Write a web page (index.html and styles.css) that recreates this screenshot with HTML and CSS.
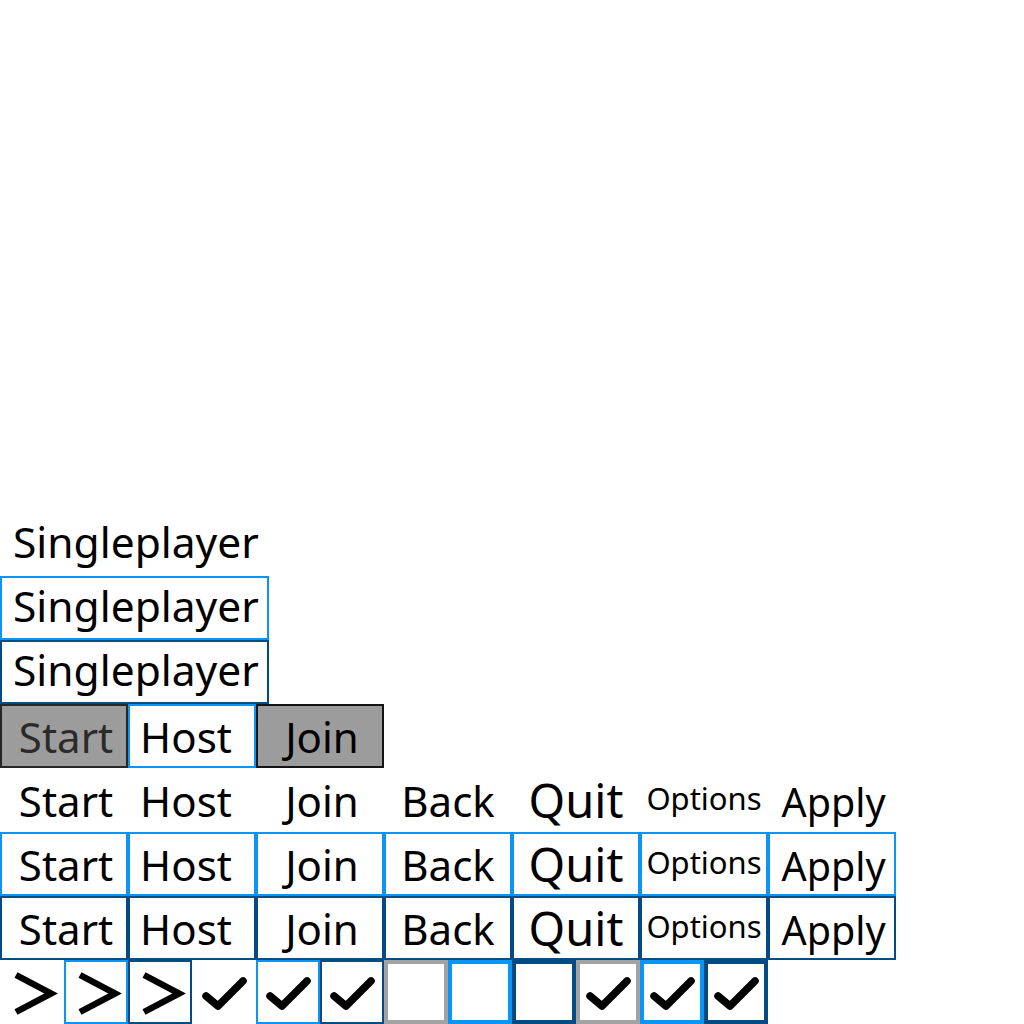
FILE: index.html
```html
<!DOCTYPE html>
<html>
<head>
<meta charset="utf-8">
<link rel="stylesheet" href="styles.css">
</head>
<body>
<div class="page">
  <div class="row"><div class="wide">Singleplayer</div></div>
  <div class="row"><div class="wide light">Singleplayer</div></div>
  <div class="row"><div class="wide dark">Singleplayer</div></div>
  <div class="row">
    <div class="btn grey soft start">Start</div>
    <div class="btn light host">Host</div>
    <div class="btn grey hard join">Join</div>
  </div>
  <div class="row">
    <div class="btn start">Start</div>
    <div class="btn host">Host</div>
    <div class="btn join">Join</div>
    <div class="btn">Back</div>
    <div class="btn quit">Quit</div>
    <div class="btn opts">Options</div>
    <div class="btn apply">Apply</div>
  </div>
  <div class="row">
    <div class="btn light start">Start</div>
    <div class="btn light host">Host</div>
    <div class="btn light join">Join</div>
    <div class="btn light">Back</div>
    <div class="btn light quit">Quit</div>
    <div class="btn light opts">Options</div>
    <div class="btn light apply">Apply</div>
  </div>
  <div class="row">
    <div class="btn dark start">Start</div>
    <div class="btn dark host">Host</div>
    <div class="btn dark join">Join</div>
    <div class="btn dark">Back</div>
    <div class="btn dark quit">Quit</div>
    <div class="btn dark opts">Options</div>
    <div class="btn dark apply">Apply</div>
  </div>
  <div class="row">
    <div class="cell"><svg viewBox="0 0 64 64"><polyline class="chev" points="16,15 51,33.5 16,52"/></svg></div>
    <div class="cell light"><svg viewBox="0 0 64 64"><polyline class="chev" points="16,15 51,33.5 16,52"/></svg></div>
    <div class="cell dark"><svg viewBox="0 0 64 64"><polyline class="chev" points="16,15 51,33.5 16,52"/></svg></div>
    <div class="cell"><svg viewBox="0 0 64 64"><polyline class="tick" points="14,36 26,46 51,21"/></svg></div>
    <div class="cell light"><svg viewBox="0 0 64 64"><polyline class="tick" points="14,36 26,46 51,21"/></svg></div>
    <div class="cell dark"><svg viewBox="0 0 64 64"><polyline class="tick" points="14,36 26,46 51,21"/></svg></div>
    <div class="cell box greyb"></div>
    <div class="cell box lightb"></div>
    <div class="cell box darkb"></div>
    <div class="cell box greyb"><svg viewBox="0 0 64 64"><polyline class="tick" points="14,36 26,46 51,21"/></svg></div>
    <div class="cell box lightb"><svg viewBox="0 0 64 64"><polyline class="tick" points="14,36 26,46 51,21"/></svg></div>
    <div class="cell box darkb"><svg viewBox="0 0 64 64"><polyline class="tick" points="14,36 26,46 51,21"/></svg></div>
  </div>
</div>
</body>
</html>
```
FILE: styles.css
```css
html, body {
  margin: 0;
  padding: 0;
  background: #ffffff;
}
body {
  font-family: "Noto Sans", "DejaVu Sans", sans-serif;
  color: #000000;
}
.page {
  height: 1024px;
  display: flex;
  flex-direction: column;
  justify-content: flex-end;
}
.row {
  display: flex;
  height: 64px;
}
.wide, .btn, .cell {
  box-sizing: border-box;
  height: 64px;
  border: 2px solid transparent;
  display: flex;
  align-items: center;
  white-space: nowrap;
}
.wide {
  font-size: 42.5px;
  padding: 0 8px 6px 11px;
}
.btn {
  width: 128px;
  justify-content: center;
  font-size: 42px;
}
.btn.start { padding-left: 4px; }
.btn.host { padding-right: 12px; }
.btn.join { padding-left: 4px; }
.btn.quit { font-size: 47px; }
.btn.opts { font-size: 31px; padding-bottom: 4px; }
.btn.apply { font-size: 39.5px; padding-top: 3px; padding-left: 3px; }
.light { border-color: #0a94f5; }
.dark { border-color: #004c82; }
.grey { background: #9c9c9c; }
.grey.soft { border-color: #262626; color: #2a2a2a; }
.grey.hard { border-color: #141414; }
.cell {
  width: 64px;
  justify-content: center;
}
.cell svg {
  width: 64px;
  height: 64px;
  flex: none;
}
.cell.box {
  border-width: 4px;
}
.cell.box svg {
  margin: -4px;
}
.greyb { border-color: #a3a3a3; }
.lightb { border-color: #0a94f5; }
.darkb { border-color: #004c82; }
.chev {
  fill: none;
  stroke: #000;
  stroke-width: 6.5;
  stroke-linejoin: miter;
}
.tick {
  fill: none;
  stroke: #000;
  stroke-width: 7.5;
  stroke-linecap: round;
  stroke-linejoin: round;
}
```
